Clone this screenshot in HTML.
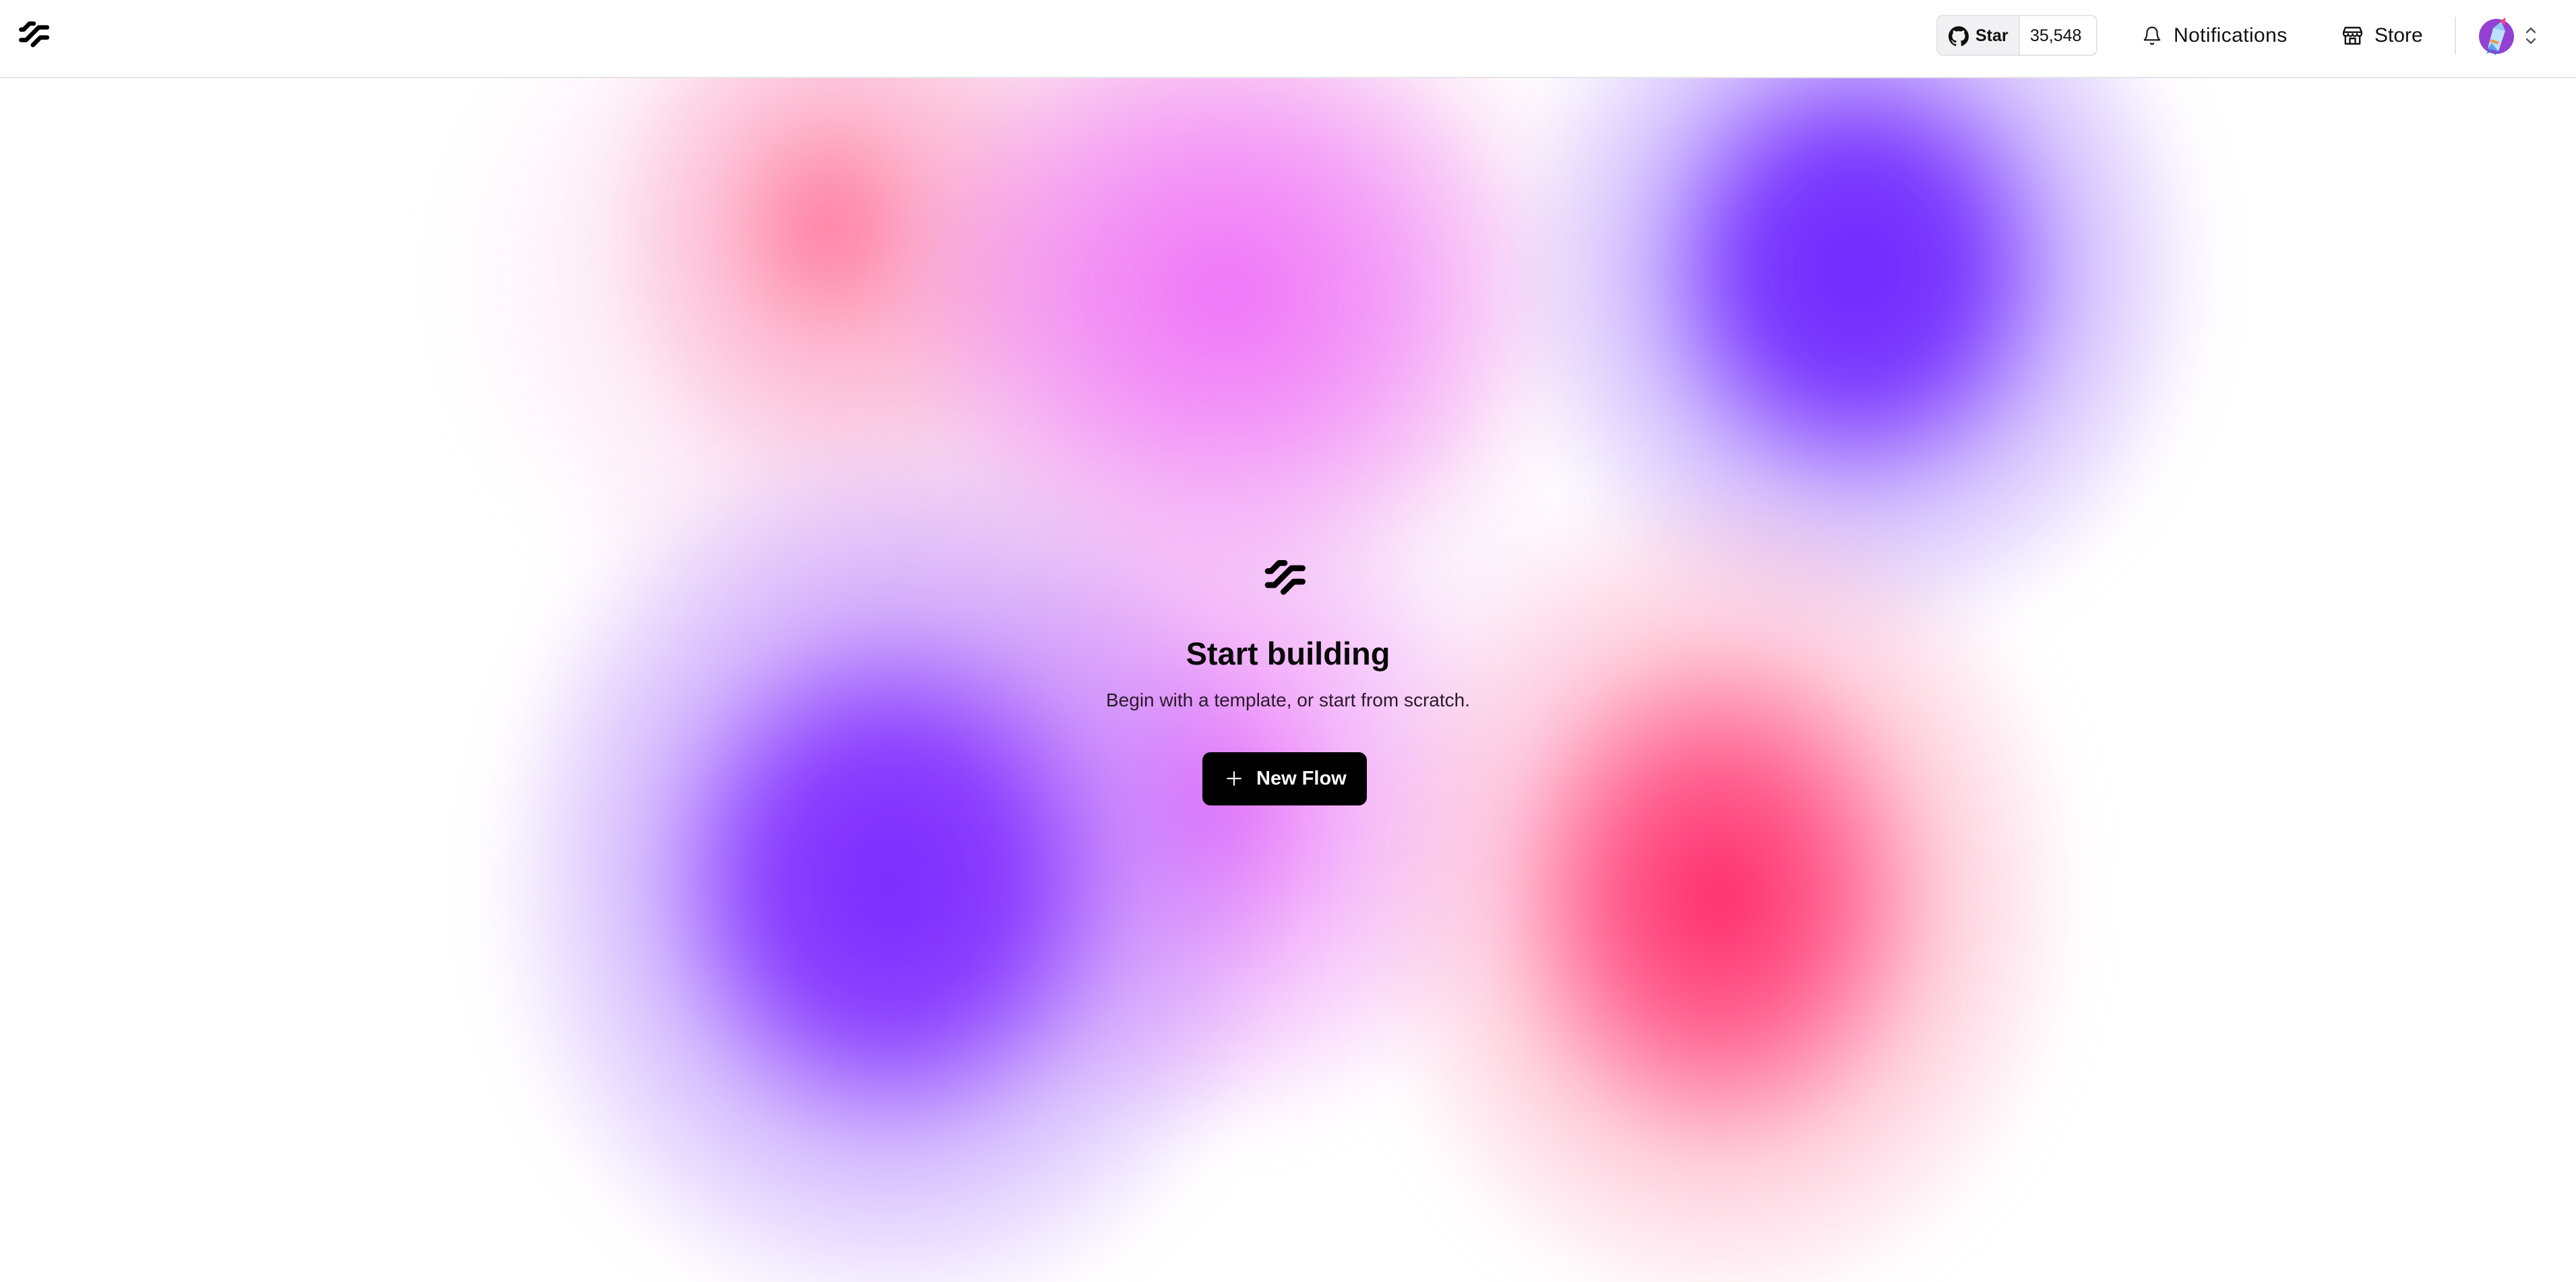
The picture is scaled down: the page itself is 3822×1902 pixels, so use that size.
<!DOCTYPE html>
<html><head><meta charset="utf-8"><style>
html,body{margin:0;padding:0}
body{width:3822px;height:1902px;position:relative;overflow:hidden;background:#fff;font-family:"Liberation Sans",sans-serif}
.bg{position:absolute;left:0;top:115px;width:3822px;height:1787px;overflow:hidden}
.b{position:absolute;border-radius:50%;filter:blur(40px)}
header{position:absolute;left:0;top:0;width:3822px;height:114px;border-bottom:2px solid #e4e4e7;background:#fff;z-index:5}
.center{position:absolute;left:0;width:3822px;text-align:center;z-index:3;white-space:nowrap}
.t{position:absolute;white-space:nowrap;line-height:1}
</style></head><body>
<header>
<svg style="position:absolute;left:20px;top:22px" width="60" height="56" viewBox="0 0 240 225"><g fill="none" stroke="#000" stroke-width="26" stroke-linecap="round" stroke-linejoin="round"><path d="M45 88 L60 88 L95 52 L120 52"/><path d="M45 150 L75 150 L150 75 L200 75"/><path d="M115 180 L160 135 L200 135"/></g></svg>
<div style="position:absolute;left:2873px;top:22px;width:235px;height:57px;border:2px solid #e4e4e7;border-radius:10px;overflow:hidden;color:#111">
 <div style="position:absolute;left:0;top:0;width:120px;height:57px;background:#f1f1f3;border-right:2px solid #e4e4e7"></div>
 <svg style="position:absolute;left:16px;top:15px" width="30" height="30" viewBox="0 0 16 16"><path fill="#111" d="M8 0C3.58 0 0 3.58 0 8c0 3.54 2.290 6.53 5.470 7.590.4.07.55-.17.55-.38v-1.340c-2.230.48-2.7-1.070-2.7-1.070-.36-.92-.89-1.170-.89-1.170-.73-.5.06-.49.06-.49.8.06 1.230.83 1.230.83.71 1.220 1.870.87 2.330.66.07-.52.28-.87.51-1.070-1.780-.2-3.650-.89-3.650-3.950 0-.87.31-1.590.82-2.150-.08-.2-.36-1.020.08-2.120 0 0 .67-.21 2.200.82a7.6 7.6 0 014 0c1.530-1.040 2.200-.82 2.200-.82.44 1.100.16 1.920.08 2.120.51.56.82 1.270.82 2.150 0 3.070-1.870 3.750-3.650 3.950.29.25.54.73.54 1.480v2.200c0 .21.15.46.55.38A8 8 0 0016 8c0-4.420-3.580-8-8-8z"/></svg>
 <span class="t" style="left:56px;top:17px;font-weight:bold;font-size:25px">Star</span>
 <span class="t" style="left:137px;top:17px;font-size:25px">35,548</span>
</div>
<svg style="position:absolute;left:3178px;top:37px" width="30" height="32" viewBox="0 0 24 24" fill="none" stroke="#111" stroke-width="1.7" stroke-linecap="round" stroke-linejoin="round"><path d="M6 8a6 6 0 0112 0c0 7 3 9 3 9H3s3-2 3-9"/><path d="M10.3 21a1.94 1.94 0 003.4 0"/></svg>
<span class="t" style="left:3225px;top:38px;font-size:30px;letter-spacing:0.4px;color:#111">Notifications</span>
<svg style="position:absolute;left:3474px;top:37px" width="33" height="32" viewBox="0 0 24 24" fill="none" stroke="#111" stroke-width="1.8" stroke-linecap="round" stroke-linejoin="round"><path d="M4 3h16l2 5H2z"/><path d="M2 8v2a2.5 2.5 0 005 0 2.5 2.5 0 005 0 2.5 2.5 0 005 0 2.5 2.5 0 005 0V8"/><path d="M4 12v9h16v-9"/><path d="M9 21v-6h6v6"/></svg>
<span class="t" style="left:3523px;top:38px;font-size:30px;color:#111">Store</span>
<div style="position:absolute;left:3642px;top:25px;width:2px;height:56px;background:#e4e4e7"></div>
<svg style="position:absolute;left:3677px;top:24px" width="56" height="60" viewBox="0 0 56 60">
 <circle cx="27" cy="30" r="26" fill="#9440d0"/>
 <path d="M20 52 L12 56 L18 46 Z" fill="#3a6fe0"/>
 <path d="M30 54 L24 58 L26 48 Z" fill="#3a6fe0"/>
 <path d="M14 48 L22 18 L34 8 L40 22 L30 52 Z" fill="#bde0fb"/>
 <path d="M22 18 L34 8 L40 22 Z" fill="#8fcaf5"/>
 <path d="M32 8 L40 2 L40 14 Z" fill="#ff3c8c"/>
 <path d="M18 36 L30 40" stroke="#e8964a" stroke-width="4"/>
 <path d="M14 48 L20 40 L30 52 Z" fill="#5a9cf0"/>
</svg>
<svg style="position:absolute;left:3745px;top:38px" width="20" height="30" viewBox="0 0 20 30" fill="none" stroke="#555" stroke-width="2.4" stroke-linecap="round" stroke-linejoin="round"><path d="M4 10 L10 4 L16 10"/><path d="M4 20 L10 26 L16 20"/></svg>
</header>
<div class="bg">
 <div class="b" style="left:650px;top:-350px;width:1800px;height:1300px;background:radial-gradient(ellipse closest-side,rgba(250,185,215,0.8),rgba(250,200,230,0.45) 60%,rgba(255,230,245,0) 100%)"></div>
 <div class="b" style="left:750px;top:320px;width:1700px;height:1250px;background:radial-gradient(ellipse closest-side,rgba(245,205,245,0.8),rgba(245,215,250,0.4) 60%,rgba(255,255,255,0) 100%)"></div>
 <div class="b" style="left:880px;top:-180px;width:700px;height:800px;background:radial-gradient(ellipse closest-side,rgba(255,110,150,0.9),rgba(255,150,180,0.5) 45%,rgba(255,190,210,0) 100%)"></div>
 <div class="b" style="left:1320px;top:-130px;width:1000px;height:900px;background:radial-gradient(ellipse closest-side,rgba(238,115,248,1),rgba(240,130,250,0.75) 45%,rgba(245,190,250,0) 100%)"></div>
 <div class="b" style="left:2230px;top:-280px;width:1050px;height:1130px;background:radial-gradient(ellipse closest-side,rgba(112,40,255,1),rgba(116,48,255,0.95) 30%,rgba(165,125,255,0.5) 62%,rgba(230,215,255,0) 100%)"></div>
 <div class="b" style="left:1350px;top:580px;width:900px;height:1000px;background:radial-gradient(ellipse closest-side,rgba(232,105,250,0.95),rgba(240,150,250,0.55) 50%,rgba(250,210,250,0) 100%)"></div>
 <div class="b" style="left:720px;top:530px;width:1200px;height:1330px;background:radial-gradient(ellipse closest-side,rgba(122,42,255,1),rgba(128,48,255,0.92) 30%,rgba(170,120,255,0.5) 60%,rgba(225,210,255,0) 100%)"></div>
 <div class="b" style="left:2010px;top:580px;width:1080px;height:1270px;background:radial-gradient(ellipse closest-side,rgba(255,40,105,1),rgba(255,70,125,0.85) 30%,rgba(255,160,190,0.5) 62%,rgba(255,225,235,0) 100%)"></div>
</div>
<svg style="position:absolute;left:1866px;top:818px;z-index:3" width="80" height="75" viewBox="0 0 240 225"><g fill="none" stroke="#000" stroke-width="26" stroke-linecap="round" stroke-linejoin="round"><path d="M45 88 L60 88 L95 52 L120 52"/><path d="M45 150 L75 150 L150 75 L200 75"/><path d="M115 180 L160 135 L200 135"/></g></svg>
<div class="center" style="top:942px;font-size:47px;font-weight:bold;color:#0a0a0a">Start building</div>
<div class="center" style="top:1023px;font-size:28px;color:#2a1a2a">Begin with a template, or start from scratch.</div>
<div style="position:absolute;left:1784px;top:1116px;width:244px;height:79px;background:#000;border-radius:12px;z-index:3;color:#fff;font-size:29px;font-weight:bold">
 <svg style="position:absolute;left:34px;top:26px" width="26" height="26" viewBox="0 0 24 24" fill="none" stroke="#fff" stroke-width="2" stroke-linecap="round"><path d="M12 3v18M3 12h18"/></svg>
 <span class="t" style="left:80px;top:25px">New Flow</span>
</div>
</body></html>
